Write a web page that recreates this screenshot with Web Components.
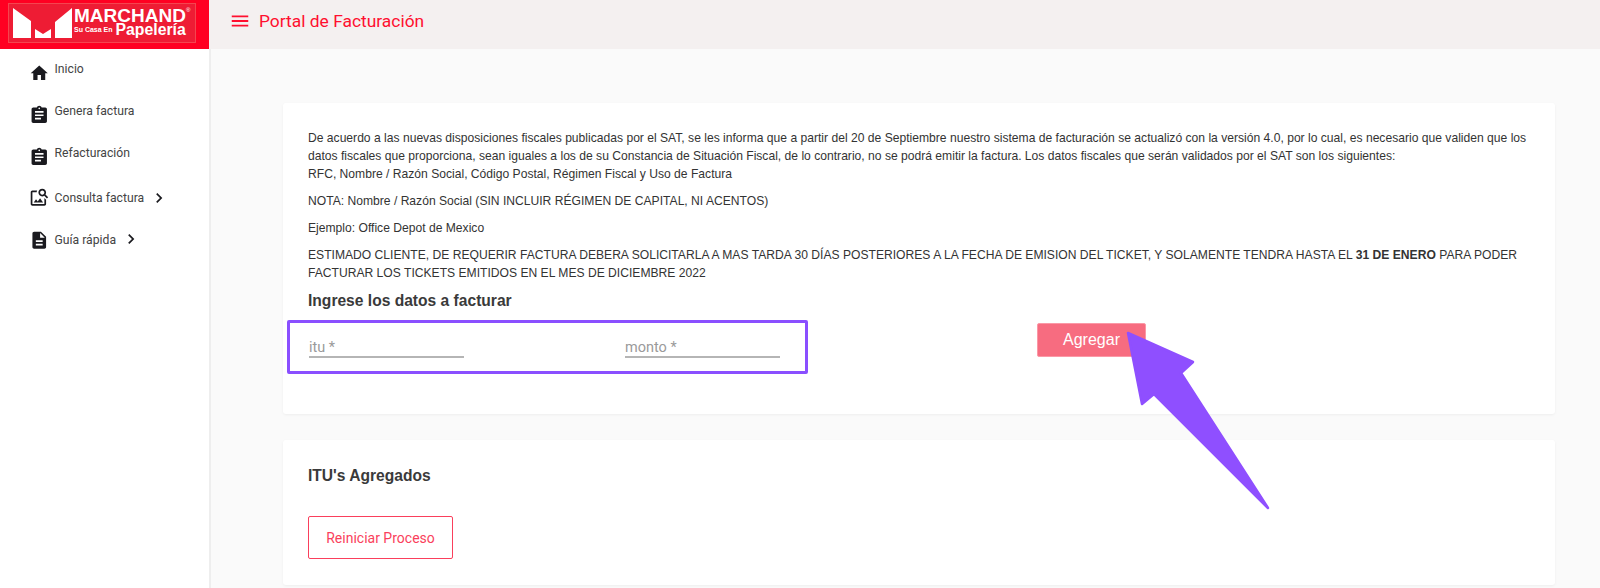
<!DOCTYPE html>
<html lang="es"><head><meta charset="utf-8"><title>Portal de Facturación</title>
<style>
html,body{margin:0;height:100%;overflow:hidden;background:#fafafa}
body{font-family:Roboto,"Liberation Sans",sans-serif;color:#212529}
</style></head><body>
<fact-app>
  <brand-logo slot="logo"></brand-logo>
  <top-bar slot="bar">Portal de Facturación</top-bar>
  <side-nav slot="nav">
    <nav-item icon="home" style="--text-y:-4px;--icon-y:0px">Inicio</nav-item>
    <nav-item icon="assignment" style="--text-y:-3px;--icon-y:1px">Genera factura</nav-item>
    <nav-item icon="assignment" style="--text-y:-3px;--icon-y:1px">Refacturación</nav-item>
    <nav-item icon="search" chevron>Consulta factura</nav-item>
    <nav-item icon="description" chevron style="--text-y:1px;--icon-y:1px">Guía rápida</nav-item>
  </side-nav>
  <info-card style="height:311px">
    <p style="margin-top:25px">De acuerdo a las nuevas disposiciones fiscales publicadas por el SAT, se les informa que a partir del 20 de Septiembre nuestro sistema de facturación se actualizó con la versión 4.0, por lo cual, es necesario que validen que los datos fiscales que proporciona, sean iguales a los de su Constancia de Situación Fiscal, de lo contrario, no se podrá emitir la factura. Los datos fiscales que serán validados por el SAT son los siguientes:<br>RFC, Nombre / Razón Social, Código Postal, Régimen Fiscal y Uso de Factura</p>
    <p>NOTA: Nombre / Razón Social (SIN INCLUIR RÉGIMEN DE CAPITAL, NI ACENTOS)</p>
    <p>Ejemplo: Office Depot de Mexico</p>
    <p>ESTIMADO CLIENTE, DE REQUERIR FACTURA DEBERA SOLICITARLA A MAS TARDA 30 DÍAS POSTERIORES A LA FECHA DE EMISION DEL TICKET, Y SOLAMENTE TENDRA HASTA EL <b>31 DE ENERO</b> PARA PODER <span style="display:block">FACTURAR LOS TICKETS EMITIDOS EN EL MES DE DICIEMBRE 2022</span></p>
    <card-title style="margin-top:0">Ingrese los datos a facturar</card-title>
    <entry-row></entry-row>
  </info-card>
  <info-card style="height:145px;margin-top:26px">
    <card-title style="margin-top:25px">ITU's Agregados</card-title>
    <outline-button>Reiniciar Proceso</outline-button>
  </info-card>
</fact-app>
<call-out></call-out>
<script>
const P={
home:'M10 20v-6h4v6h5v-8h3L12 3 2 12h3v8z',
assignment:'M19 3h-4.18C14.4 1.84 13.3 1 12 1c-1.3 0-2.4.84-2.82 2H5c-1.1 0-2 .9-2 2v14c0 1.1.9 2 2 2h14c1.1 0 2-.9 2-2V5c0-1.1-.9-2-2-2zm-7 0c.55 0 1 .45 1 1s-.45 1-1 1-1-.45-1-1 .45-1 1-1zm2 14H7v-2h7v2zm3-4H7v-2h10v2zm0-4H7V7h10v2z',
description:'M14 2H6c-1.1 0-1.99.9-1.99 2L4 20c0 1.1.89 2 1.99 2H18c1.1 0 2-.9 2-2V8l-6-6zm2 16H8v-2h8v2zm0-4H8v-2h8v2zm-3-5V3.5L18.5 9H13z',
search:'M18 13v7H4V6h5.02c.05-.71.22-1.38.48-2H4c-1.1 0-2 .9-2 2v14c0 1.1.9 2 2 2h14c1.1 0 2-.9 2-2v-5l-2-2zm-1.5 5h-11l2.75-3.53 1.96 2.36 2.75-3.54L16.5 18zm2.8-9.11c.44-.7.7-1.51.7-2.39C20 4.01 17.99 2 15.5 2S11 4.01 11 6.5s2.01 4.5 4.49 4.5c.88 0 1.7-.26 2.39-.7L21 13.42 22.42 12 19.3 8.89zM15.5 9C14.12 9 13 7.88 13 6.5S14.12 4 15.5 4 18 5.12 18 6.5 16.88 9 15.5 9z',
chevron:'M10 6L8.59 7.41 13.17 12l-4.58 4.59L10 18l6-6z',
menu:'M3 18h18v-2H3v2zm0-5h18v-2H3v2zm0-7v2h18V6H3z'};
const svg=(k,s,c)=>`<svg width="${s}" height="${s}" viewBox="0 0 24 24" fill="${c}" aria-hidden="true"><path d="${P[k]}"/></svg>`;
function def(name,html){
  customElements.define(name,class extends HTMLElement{
    constructor(){super();this.attachShadow({mode:'open'}).innerHTML=typeof html==='function'?html(this):html;}
  });
}
def('fact-app',`<style>
:host{display:grid;grid-template-columns:209px 1fr;grid-template-rows:49px 1fr;height:588px;overflow:hidden}
.nav{background:#fff}
main{padding:54px 45px 0 72px;background:#fafafa;min-width:0;border-left:2px solid #eee}
</style>
<slot name="logo"></slot><slot name="bar"></slot>
<div class="nav"><slot name="nav"></slot></div>
<main><slot></slot></main>`);
def('brand-logo',`<style>
:host{display:flex;background:#ff0022;padding:3px 13px 6px 8px;box-sizing:border-box;height:49px;font-family:"Liberation Sans",sans-serif;color:#fff}
.in{flex:1;background:#ee1c34;box-shadow:0 0 0 1px #f4454f inset;display:flex;align-items:flex-start;padding:5px 0 0 5px}
svg{display:block;flex:none}
.t{display:flex;flex-direction:column;width:111px;margin-left:2px;position:relative}
.m{font-weight:700;font-size:19px;line-height:15px;white-space:nowrap}
.r{position:absolute;left:112px;top:-1px;font-size:6px;line-height:7px}
.l{display:flex;align-items:baseline;line-height:14px;white-space:nowrap}
.s{font-size:7px;font-weight:700;transform:translateY(-3px)}
.p{font-size:15.8px;font-weight:700;margin-left:3px}
</style>
<div class="in"><svg width="59" height="30" viewBox="0 0 59 30" fill="#fff" aria-hidden="true"><path d="M0 0L18 13V30H0zM22 21L30 26 38 21V30H22zM42 14L59 0V30H42z"/></svg>
<div class="t"><span class="m">MARCHAND</span><span class="r">®</span><div class="l"><span class="s">Su Casa En</span><span class="p">Papelería</span></div></div></div>`);
def('top-bar',`<style>
:host{display:flex;align-items:center;background:#f4f0f0;color:#ff0f2f;font-size:17.4px;font-weight:400;padding:0 0 7px 20px;gap:8px;height:49px;box-sizing:border-box}
svg{display:block}
</style>${svg('menu',22,'#ff0f2f')}<span><slot></slot></span>`);
def('side-nav',`<style>:host{display:block;padding-top:3px}</style><slot></slot>`);
def('nav-item',el=>`<style>
:host{display:flex;align-items:center;height:41.6px;padding-left:29px;font-size:12.2px;color:#444;white-space:nowrap}
svg{display:block;flex:none}
.i{transform:translateY(var(--icon-y,0))}
.t{margin-left:5px;transform:translateY(var(--text-y,0))}
.c{margin-left:5px}
</style><span class="i">${svg(el.getAttribute('icon'),20.5,'#1a1a1f')}</span><span class="t"><slot></slot></span>${el.hasAttribute('chevron')?`<span class="c">${svg('chevron',20,'#1a1a1f')}</span>`:''}`);
def('info-card',`<style>
:host{display:block;background:#fff;border-radius:3px;box-shadow:0 1px 3px rgba(0,0,0,.05);padding:1px 26px 0 25px;font:12.12px/18px "Liberation Sans",sans-serif;color:#333;box-sizing:border-box}
::slotted(p){margin:0 0 9px}
</style><slot></slot>`);
def('card-title',`<style>:host{display:block;font-family:"Liberation Sans",sans-serif;font-weight:700;font-size:15.6px;line-height:20px;color:#3a3a3a}</style><slot></slot>`);
def('entry-row',`<style>
:host{display:block;position:relative;height:56px}
.f{position:absolute;width:155px;top:26px;height:19px;border-bottom:2px solid #b5b5b5;color:#9a9a9a;font-family:Roboto,sans-serif;font-size:14.5px;line-height:22px;box-sizing:content-box}
.box{position:absolute;left:-21px;top:9px;width:515px;height:48px;border:3px solid #8a4fff;box-sizing:content-box;border-radius:2px}
.b{position:absolute;left:729px;top:11.5px;width:109px;height:34px;background:#f76c80;border:1px solid #fb98a6;box-sizing:border-box;border-radius:2px;color:#fff;font:16px/32px "Liberation Sans",sans-serif;text-align:center}
</style><div class="f" style="left:1px">itu *</div><div class="f" style="left:317px">monto *</div><div class="box"></div><div class="b">Agregar</div>`);
def('outline-button',`<style>
:host{display:flex;align-items:center;justify-content:center;width:145px;height:43px;margin-top:30px;border:1px solid #fa3f5c;box-sizing:border-box;border-radius:2px;color:#fa3f5c;font-family:Roboto,sans-serif;font-size:14px}
</style><slot></slot>`);
def('call-out',`<style>:host{position:absolute;left:0;top:0;width:1600px;height:588px;pointer-events:none}</style>
<svg width="1600" height="588" aria-hidden="true"><path d="M1128 333L1193 362 1181 373 1268 508 1154 394 1142 404Z" fill="#8f4fff" stroke="#8f4fff" stroke-width="2.5" stroke-linejoin="round"/></svg>`);
</script>
</body></html>
